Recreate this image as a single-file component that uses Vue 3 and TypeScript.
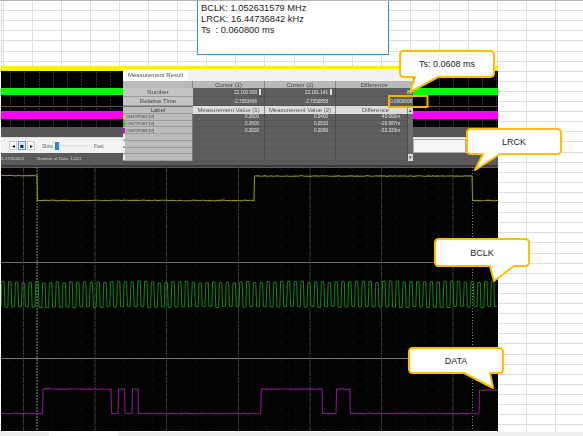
<script setup lang="ts">
function noise(seed: number): number {
  const v = Math.sin(seed * 12.9898) * 43758.5453;
  return v - Math.floor(v) - 0.5;
}

function trace(edges: number[], levels: number[], end: number, amp: number, seed: number): string {
  let d = `M1 ${levels[0]}`;
  let x = 1;
  let s = seed;
  edges.concat(end).forEach((edge, i) => {
    const y = levels[i];
    while (x < edge - 2) {
      x += 2;
      s += 1;
      d += ` L${x} ${(y + noise(s) * amp).toFixed(1)}`;
    }
    d += ` L${edge} ${y}`;
    if (i < edges.length) d += ` L${edge + 0.6} ${levels[i + 1]}`;
    x = edge + 0.6;
  });
  return d;
}

const yellowPath = trace([37, 254, 472], [175.5, 200.5, 176, 200.5], 498, 0.8, 3);

const purpleEdges = [42.5, 111, 118, 124.5, 132, 138, 260.7, 322, 336, 349.7, 479];
const purpleLevels = [413.5, 389, 413.5, 389, 413.5, 389, 413.5, 389, 413.5, 389, 413.5, 390];
const purplePath = trace(purpleEdges, purpleLevels, 498, 0.8, 90);

function clock(): string {
  let d = 'M1 307';
  const period = 6.8;
  for (let i = 0; i < 73; i++) {
    const x = 1 + i * period;
    const top = 282 + noise(i + 7) * 2;
    const bottom = 307 + noise(i + 31) * 1.5;
    d += ` L${(x + 0.8).toFixed(1)} ${top.toFixed(1)} L${(x + 3.2).toFixed(1)} ${top.toFixed(1)} L${(x + 4).toFixed(1)} ${bottom.toFixed(1)} L${(x + 6.8).toFixed(1)} ${bottom.toFixed(1)}`;
  }
  return d;
}
const greenPath = clock();

const gridLines = [23.5, 95, 166.5, 238.5, 310, 381.5, 453];

const chipRows = [
  { color: '#f4e400', name: 'CH1TP069 [V]', one: '0.2800', two: '0.2400', diff: '-40.000m' },
  { color: '#00e000', name: 'CH2TP067 [V]', one: '0.2800', two: '0.2533', diff: '-26.667m' },
  { color: '#e000e0', name: 'CH3TP068 [V]', one: '0.2600', two: '0.2066', diff: '-53.333m' },
  { color: '#eeeeee', name: '', one: '', two: '', diff: '' },
  { color: '#eeeeee', name: '', one: '', two: '', diff: '' },
  { color: '#eeeeee', name: '', one: '', two: '', diff: '' },
  { color: '#eeeeee', name: '', one: '', two: '', diff: '' },
];

const callouts = [
  { d: 'M404 51H490Q494 51 494 55V73Q494 77 490 77H438L410 92L415 77H404Q400 77 400 73V55Q400 51 404 51Z', x: 447, y: 67, label: 'Ts: 0.0608 ms' },
  { d: 'M471 129H557Q561 129 561 133V150Q561 154 557 154H500L475 170L483 154H471Q467 154 467 150V133Q467 129 471 129Z', x: 514, y: 145, label: 'LRCK' },
  { d: 'M439 239H525Q529 239 529 243V262Q529 266 525 266H514L494 281L490 266H439Q435 266 435 262V243Q435 239 439 239Z', x: 482, y: 256, label: 'BCLK' },
  { d: 'M413 348H499Q503 348 503 352V369Q503 373 499 373H490L493 388L464 373H413Q409 373 409 369V352Q409 348 413 348Z', x: 456, y: 364, label: 'DATA' },
];
</script>

<template>
  <div class="sheet">
    <div class="note">
      <div>BCLK: 1.052631579 MHz</div>
      <div>LRCK: 16.44736842 kHz</div>
      <div>Ts &nbsp;: 0.060800 ms</div>
    </div>

    <div class="scope">
      <div class="yellow-bar"></div>
      <div class="lane lane-a"></div>
      <div class="solid green"></div>
      <div class="lane lane-b"></div>
      <div class="divider"></div>
      <div class="lane lane-c"></div>
      <div class="solid magenta"></div>
      <div class="lane lane-d"></div>
      <div class="idle"></div>

      <div class="controls">
        <div class="transport">
          <span class="btn">&#9666;</span>
          <span class="btn active">&#9632;</span>
          <span class="btn">&#9656;</span>
        </div>
        <span class="speed">Slow</span>
        <div class="slider"><i class="thumb"></i></div>
        <span class="speed">Fast</span>
        <div class="field"></div>
      </div>

      <div class="status">
        <span class="status-time">4.17350402</span>
        <span>Number of Data: 1,001</span>
      </div>

      <svg class="plot" width="497" height="264" viewBox="1 167 497 264">
        <defs>
          <pattern id="dots" x="9.2" y="167" width="14.3" height="9.6" patternUnits="userSpaceOnUse">
            <rect x="0" y="2" width="1" height="1" fill="#2a2a2a" />
          </pattern>
        </defs>
        <rect x="1" y="167" width="497" height="264" fill="#020202" />
        <rect x="1" y="167" width="497" height="264" fill="url(#dots)" />
        <rect x="1" y="166" width="497" height="2" fill="#5a5a5a" />
        <line x1="1" x2="498" y1="262.5" y2="262.5" stroke="#6e6e6e" />
        <line x1="1" x2="498" y1="358.5" y2="358.5" stroke="#7a7a7a" />
        <line v-for="x in gridLines" :key="x" :x1="x" :x2="x" y1="167" y2="431" stroke="#3a3a3a" stroke-dasharray="6 1" />
        <line x1="37" x2="37" y1="167" y2="431" stroke="#8c8c8c" stroke-dasharray="2 1" />
        <line x1="472.5" x2="472.5" y1="167" y2="431" stroke="#8c8c8c" stroke-dasharray="1 2" />
        <path :d="yellowPath" fill="none" stroke="#8f8f1a" stroke-width="1.1" />
        <path :d="greenPath" fill="none" stroke="#128a12" stroke-width="1" />
        <path :d="purplePath" fill="none" stroke="#86198a" stroke-width="1.1" />
      </svg>

      <div class="dialog">
        <div class="dialog-title"><span class="tab">Measurement Result</span></div>
        <div class="table">
          <div class="head blank"></div>
          <div class="head">Cursor (1)</div>
          <div class="head">Cursor (2)</div>
          <div class="head wide">Difference</div>

          <div class="key">Number</div>
          <div class="val marked">22,100.500<i class="marker"></i></div>
          <div class="val marked">22,181.141<i class="marker"></i></div>
          <div class="val wide flush">80</div>

          <div class="key">Relative Time</div>
          <div class="val marked">-2.7053466</div>
          <div class="val marked">-2.7050858</div>
          <div class="val wide flush">0.0000608</div>

          <div class="key label-head">Label</div>
          <div class="head light">Measurement Value (1)</div>
          <div class="head light">Measurement Value (2)</div>
          <div class="head light shifted">Difference</div>
          <div class="scroll-btn">&#9652;</div>

          <template v-for="(row, i) in chipRows" :key="i">
            <div class="chip-cell"><i class="chip" :style="{ background: row.color }"></i>{{ row.name }}</div>
            <div class="val row">{{ row.one }}</div>
            <div class="val row">{{ row.two }}</div>
            <div class="val row">{{ row.diff }}</div>
            <div class="scroll-track" :class="{ 'scroll-end': i === 6 }">{{ i === 6 ? '&#9662;' : '' }}</div>
          </template>
        </div>
      </div>
    </div>

    <svg class="callouts" width="583" height="436" viewBox="0 0 583 436">
      <rect x="389" y="96" width="38.5" height="11" fill="none" stroke="#f2b200" stroke-width="2" />
      <g v-for="c in callouts" :key="c.label">
        <path :d="c.d" fill="#fff" stroke="#ffbe00" stroke-width="2" stroke-linejoin="round" />
        <text :x="c.x" :y="c.y" text-anchor="middle" class="callout-text">{{ c.label }}</text>
      </g>
    </svg>

    <div class="tabs">
      <span class="sheet-tab first"></span>
      <span class="sheet-tab second"></span>
    </div>
  </div>
</template>

<style>
html,
body {
  margin: 0;
  background: #fff;
}
</style>

<style scoped>
.sheet {
  position: relative;
  width: 583px;
  height: 436px;
  overflow: hidden;
  box-sizing: border-box;
  border-top: 1px solid #b5b5b5;
  font-family: "Liberation Sans", Arial, sans-serif;
  background-color: #fff;
  background-image:
    repeating-linear-gradient(90deg, #dedede 0 1px, transparent 1px 29.05px),
    repeating-linear-gradient(180deg, transparent 0 9.1px, #dedede 9.1px 10.1px);
  background-position: 3px 0, 0 0;
}
.note {
  position: absolute;
  left: 197px;
  top: -3px;
  width: 192px;
  height: 57px;
  box-sizing: border-box;
  padding: 4px 0 0 3px;
  background: #fff;
  border: 1px solid #2c96c8;
  font-size: 9.3px;
  line-height: 11px;
  color: #222;
}
.scope {
  position: absolute;
  left: 1px;
  top: 65px;
  width: 497px;
  display: flex;
  flex-direction: column;
  background: #000;
}
.yellow-bar {
  height: 5px;
  background: #fff000;
}
.lane {
  background-color: #000;
  background-image:
    repeating-linear-gradient(180deg, #000 0 1px, transparent 1px 3px),
    repeating-linear-gradient(90deg, #333 0 1px, transparent 1px 14.3px);
  background-position: 0 0, 9px 0;
}
.lane-a { height: 17px; }
.lane-b { height: 11px; }
.lane-c { height: 4px; }
.lane-d { height: 8px; }
.solid { height: 7px; }
.green { background: #00ff00; }
.magenta { height: 8px; background: #ff00ff; }
.divider { height: 1px; background: #555; }
.idle { height: 10px; background: #565656; }
.controls {
  height: 16px;
  box-sizing: border-box;
  border-top: 1px solid #ddd;
  display: flex;
  align-items: center;
  background: #f2f2f2;
  padding-left: 8px;
  font-size: 5px;
  color: #666;
  filter: blur(0.25px);
}
.transport {
  display: flex;
  width: 27px;
  gap: 1px;
}
.btn {
  width: 8px;
  height: 9px;
  display: flex;
  align-items: center;
  justify-content: center;
  box-sizing: border-box;
  background: #fafafa;
  border: 1px solid #ccc;
  font-size: 6px;
  line-height: 1;
  color: #111;
}
.btn.active {
  border-color: #5aa0de;
  background: #d7e8f7;
}
.speed {
  margin-left: 6px;
  width: 10px;
}
.slider {
  position: relative;
  width: 33px;
  height: 2px;
  margin-left: 3px;
  background: #e2e2e2;
}
.thumb {
  position: absolute;
  left: 0;
  top: -3px;
  width: 4px;
  height: 8px;
  background: #2389e6;
}
.field {
  margin-left: auto;
  margin-right: 32px;
  width: 53px;
  height: 14px;
  box-sizing: border-box;
  border: 1px solid #aaa;
  background: #f6f6f6;
}
.status {
  height: 14px;
  box-sizing: border-box;
  padding-bottom: 2px;
  display: flex;
  align-items: center;
  gap: 14px;
  background: #5a5a5a;
  border-bottom: 2px solid #3a3a3a;
  font-size: 4.4px;
  color: #cfcfcf;
  filter: blur(0.25px);
}
.status-time {
  width: 22px;
  white-space: nowrap;
}
.plot {
  display: block;
  filter: blur(0.3px);
}
.dialog {
  position: absolute;
  left: 122px;
  top: 3px;
  width: 290px;
  height: 92px;
  display: flex;
  flex-direction: column;
  background: #5e5e5e;
  filter: blur(0.25px);
}
.dialog-title {
  height: 12px;
  flex: none;
  background: #f1f1f1;
  display: flex;
}
.tab {
  padding: 0 5px;
  background: #fbfbfb;
  font-size: 6px;
  line-height: 12px;
  color: #555;
}
.table {
  flex: 1;
  display: grid;
  grid-template-columns: 70px 72px 71px 72px 5px;
  grid-template-rows: 7px 9px 9px 8px repeat(7, 1fr);
  font-size: 6px;
  color: #444;
}
.head,
.key {
  display: flex;
  align-items: center;
  justify-content: center;
  white-space: nowrap;
  overflow: hidden;
  background: #b9b9b9;
  border-right: 1px solid #8a8a8a;
}
.wide {
  grid-column: span 2;
}
.head.light {
  background: #dcdcdc;
  color: #555;
}
.head.shifted {
  padding-left: 8px;
}
.key {
  background: #c4c4c4;
  border-bottom: 1px solid #9a9a9a;
  border-right: 0;
  color: #444;
}
.label-head {
  background: #bdbdbd;
  border-top: 1px solid #777;
}
.val {
  display: flex;
  align-items: center;
  justify-content: flex-end;
  padding-right: 7px;
  background: #5e5e5e;
  font-family: "Liberation Sans", Arial, sans-serif;
  font-size: 4.6px;
  color: #e2e2e2;
  border-right: 1px solid #4c4c4c;
  border-bottom: 1px solid #565656;
  overflow: hidden;
  white-space: nowrap;
}
.val.flush {
  padding-right: 1px;
  border-right: 0;
}
.val.row:nth-child(5n + 4) {
  padding-right: 5px;
}
.val.marked {
  position: relative;
}
.marker {
  position: absolute;
  right: 3px;
  top: 1px;
  width: 2px;
  height: 6px;
  background: #dedede;
}
.chip-cell {
  display: flex;
  align-items: center;
  gap: 1px;
  background: #bbb;
  border-bottom: 1px solid #9d9d9d;
  border-right: 1px solid #777;
  font-size: 4.4px;
  color: #444;
  white-space: nowrap;
  overflow: hidden;
}
.chip {
  width: 2px;
  height: 5px;
  flex: none;
}
.scroll-track {
  background: #6b6b6b;
}
.scroll-btn,
.scroll-end {
  display: flex;
  align-items: center;
  justify-content: center;
  background: #d8d8d8;
  color: #444;
  font-size: 5px;
  line-height: 1;
  overflow: hidden;
}
.callouts {
  position: absolute;
  left: 0;
  top: -1px;
}
.callout-text {
  font-family: "Liberation Sans", Arial, sans-serif;
  font-size: 9px;
  fill: #222;
}
.tabs {
  position: absolute;
  left: 0;
  right: 0;
  bottom: 0;
  height: 4px;
  background: #fff;
  display: flex;
  gap: 69px;
}
.sheet-tab {
  background: #efefef;
  border-radius: 2px 2px 0 0;
}
.first { width: 49px; }
.second { flex: 1; }
</style>
